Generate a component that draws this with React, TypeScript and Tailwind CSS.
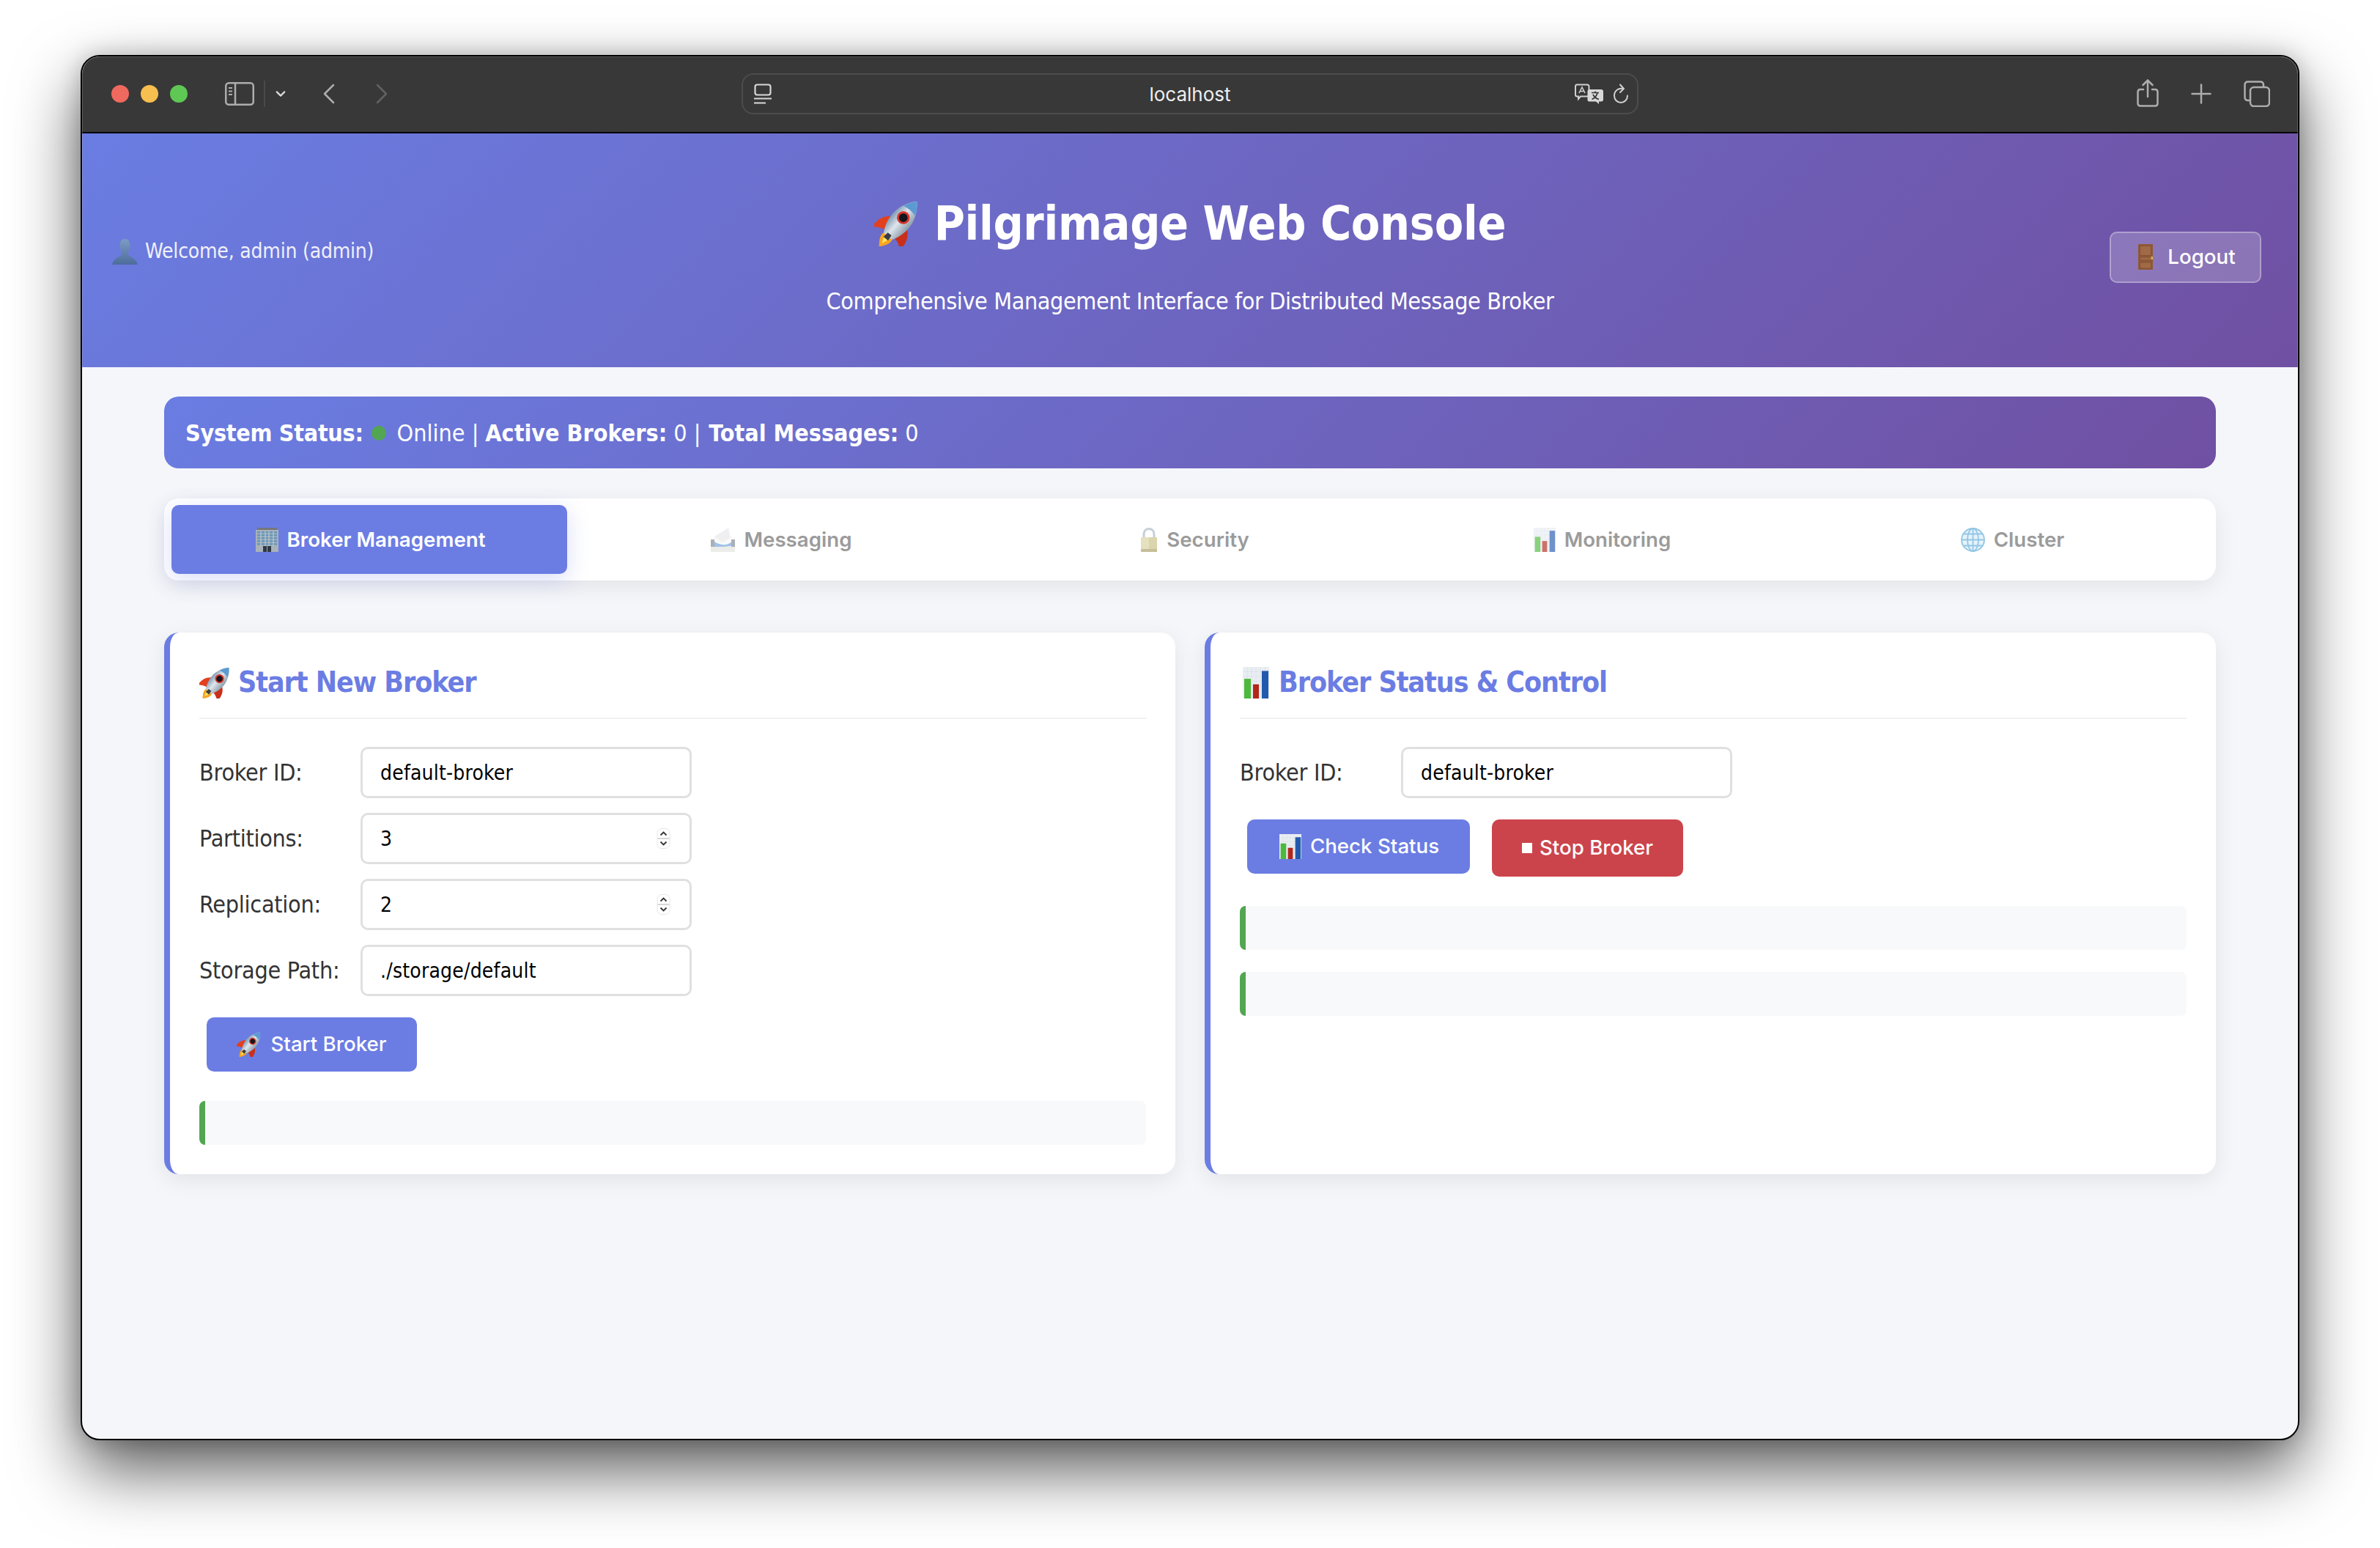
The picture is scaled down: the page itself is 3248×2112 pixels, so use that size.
import React from "react";

const sans = "font-['DejaVu_Sans_Condensed','Liberation_Sans',sans-serif]";
const ui = "font-['Inter','Liberation_Sans',sans-serif]";

function Rocket({ className }: { className: string }) {
  return (
    <svg viewBox="0 2 60 60" className={className}>
      <defs>
        <linearGradient id="rb" x1="0" y1="0" x2="1" y2="0">
          <stop offset="0" stopColor="#7f9ab4" />
          <stop offset="0.45" stopColor="#dfe6ec" />
          <stop offset="1" stopColor="#8d9cab" />
        </linearGradient>
      </defs>
      <g transform="rotate(40 32 32)">
        <path d="M25 52 C22 60 28 66 32 72 C36 66 42 60 39 52Z" fill="#f6a623" />
        <path d="M28.500 52 C27.500 58 31 62 32 66 C33 62 36.500 58 35.500 52Z" fill="#ffe668" />
        <path d="M19 30 C9 37 7 47 8 58 C13 53 19 50 25 50Z" fill="#e2401f" />
        <path d="M45 30 C55 37 57 47 56 58 C51 53 45 50 39 50Z" fill="#c92f1a" />
        <path d="M32 -6 C21 5 16 20 18 34 C19 42 22 49 25 54 L39 54 C42 49 45 42 46 34 C48 20 43 5 32 -6Z" fill="url(#rb)" />
        <path d="M32 -6 C27 -1 24 4 22 10 C28 8 36 8 42 10 C40 4 37 -1 32 -6Z" fill="#5c9bd1" />
        <circle cx="32" cy="22" r="8.500" fill="#d5372a" />
        <circle cx="32" cy="22" r="5.700" fill="#15151c" />
        <path d="M29 50 L35 50 L36 58 L28 58Z" fill="#3c3c46" />
      </g>
    </svg>
  );
}

function Chart({ className }: { className: string }) {
  return (
    <svg viewBox="0 0 36 40" className={className} preserveAspectRatio="none">
      <rect width="36" height="40" fill="#e9eef3" />
      <path d="M0 6H36M0 12H36M0 18H36M0 24H36M0 30H36M6 0V40M12 0V40M18 0V40M24 0V40M30 0V40" stroke="#d4dce4" strokeWidth="0.500" />
      <rect x="2" y="15" width="9" height="25" fill="#4cb93a" />
      <rect x="14" y="22" width="8" height="18" fill="#b3261a" />
      <rect x="26" y="5" width="9" height="35" fill="#2259ad" />
    </svg>
  );
}

function Building({ className }: { className: string }) {
  return (
    <svg viewBox="0 0 33 33" className={className}>
      <rect x="3" y="0" width="27" height="4" fill="#77777c" />
      <rect x="1" y="3" width="31" height="30" fill="#a8b2ba" />
      {[5, 9, 13, 17, 21].map((y) => (
        <rect key={y} x="3" y={y} width="27" height="2.600" fill="#6a97b8" />
      ))}
      <path d="M8 5V25M14 5V25M19 5V25M25 5V25" stroke="#c9d2d8" strokeWidth="1" />
      <rect x="11" y="25" width="11" height="8" fill="#2f3a44" />
      <rect x="16" y="25" width="1" height="8" fill="#9aa5ad" />
    </svg>
  );
}

function Envelope({ className }: { className: string }) {
  return (
    <svg viewBox="0 0 33 33" className={className}>
      <path d="M5 12 L24 0 L29 24 L6 27Z" fill="#e8e8ea" />
      <path d="M5 12 L16 20 L29 12 L29 24 L6 27Z" fill="#f6f6f6" />
      <path d="M5 19 C12 24 22 25 29 19 L29 25 L5 27Z" fill="#6fa3dc" />
      <rect x="0" y="16" width="5" height="12" fill="#7d8790" />
      <rect x="28" y="16" width="5" height="12" fill="#7d8790" />
      <rect x="0" y="26" width="33" height="7" fill="#e2e2dc" />
    </svg>
  );
}

function Lock({ className }: { className: string }) {
  return (
    <svg viewBox="0 0 24 33" className={className}>
      <path d="M5 15 V9 C5 -1 19 -1 19 9 V15" fill="none" stroke="#a8b6c6" strokeWidth="3" />
      <rect x="1" y="13" width="22" height="20" rx="1" fill="#c9bf82" />
      <rect x="1" y="13" width="11" height="20" fill="#d8d09a" />
      <rect x="1" y="29" width="22" height="4" fill="#a89c62" />
    </svg>
  );
}

function Globe({ className }: { className: string }) {
  return (
    <svg viewBox="0 0 33 33" className={className} fill="none" stroke="#5aa9d6" strokeWidth="1.800">
      <circle cx="16.500" cy="16.500" r="15.500" fill="#d8eefa" />
      <ellipse cx="16.500" cy="16.500" rx="7.500" ry="15.500" />
      <path d="M16.500 1V32M1 16.500H32M3.500 8.500H29.500M3.500 24.500H29.500" />
    </svg>
  );
}

function Door({ className }: { className: string }) {
  return (
    <svg viewBox="0 0 20 35" className={className}>
      <rect width="20" height="35" fill="#8f5a38" />
      <rect x="2.500" y="2.500" width="15" height="13" fill="#a06a45" stroke="#7c4c2e" strokeWidth="0.700" />
      <rect x="2.500" y="18" width="15" height="4" fill="#a06a45" stroke="#7c4c2e" strokeWidth="0.700" />
      <rect x="2.500" y="25" width="15" height="8" fill="#a06a45" stroke="#7c4c2e" strokeWidth="0.700" />
      <rect x="17.500" y="17" width="2.500" height="4" fill="#e0b040" />
    </svg>
  );
}

function Person({ className }: { className: string }) {
  return (
    <svg viewBox="0 0 35 35" className={className}>
      <defs>
        <linearGradient id="pg" x1="0" y1="0" x2="0" y2="1">
          <stop offset="0" stopColor="#7c9bc4" />
          <stop offset="1" stopColor="#4d6c9c" />
        </linearGradient>
      </defs>
      <path d="M17.500 0 C23 0 25 5 24.500 10 C24 15 22 18 21.500 21 C22 24 33 25 35 35 H0 C2 25 13 24 13.500 21 C13 18 11 15 10.500 10 C10 5 12 0 17.500 0Z" fill="url(#pg)" />
    </svg>
  );
}

function Spinner() {
  return (
    <svg viewBox="0 0 18 28" className="absolute right-[29px] top-1/2 h-[28px] w-[19px] -translate-y-1/2">
      <rect x="0.500" y="0.500" width="17" height="27" rx="6" fill="#fff" stroke="#e6e6e6" />
      <path d="M1 14H17" stroke="#d8d8d8" strokeWidth="2" />
      <path d="M5 9.500L9 5.500L13 9.500M5 18.500L9 22.500L13 18.500" fill="none" stroke="#333" strokeWidth="1.800" />
    </svg>
  );
}

function Field({ label, value, spin }: { label: string; value: string; spin?: boolean }) {
  return (
    <div className="mb-[20px] flex h-[70px] items-center">
      <label className={`w-[220px] shrink-0 text-[32px] tracking-[-0.25px] text-[#333] ${sans}`}>{label}</label>
      <div className="relative h-[70px] w-[452px]">
        <input
          readOnly
          value={value}
          className={`h-full w-full rounded-[10px] border-[3px] border-[#e0e0e0] bg-white px-[24px] text-[28px] tracking-[0.2px] text-black outline-none ${sans}`}
        />
        {spin && <Spinner />}
      </div>
    </div>
  );
}

function Msg({ className = "" }: { className?: string }) {
  return <div className={`h-[60px] rounded-[8px] border-l-[8px] border-[#52a651] bg-[#f8f9fa] ${className}`} />;
}

function Card({ icon, title, children }: { icon: React.ReactNode; title: string; children: React.ReactNode }) {
  return (
    <section className="rounded-[20px] border-l-[8px] border-[#6b7de3] bg-white p-[40px] shadow-[0_8px_30px_rgba(0,0,0,0.08)]">
      <h3 className={`mb-[38px] flex h-[78px] items-center gap-[10px] border-b-2 border-[#f0f0f0] pb-[20px] text-[39px] font-bold tracking-[-1.05px] text-[#6b7de3] ${sans}`}>
        {icon}
        {title}
      </h3>
      {children}
    </section>
  );
}

function Tab({ icon, label, active }: { icon: React.ReactNode; label: string; active?: boolean }) {
  return (
    <button
      className={`flex h-[94px] min-w-0 flex-1 items-center justify-center rounded-[10px] text-[27.7px] font-semibold ${ui} ${
        active ? "bg-[#6b7de3] text-white shadow-[0_8px_30px_rgba(107,125,227,0.25)]" : "text-[#666] opacity-65"
      }`}
    >
      <span className={`mt-[1px] flex items-center ${active ? "ml-[2px] gap-[11px]" : "ml-[5px] gap-[12px]"}`}>
        {icon}
        {label}
      </span>
    </button>
  );
}

export default function App() {
  return (
    <div className="h-[2112px] w-[3248px] overflow-hidden bg-white pl-[110px] pt-[75px]">
      <div className="relative flex h-[1890px] w-[3028px] flex-col overflow-hidden rounded-[26px] border-2 border-black bg-[#f5f6fa] shadow-[0_40px_90px_rgba(0,0,0,0.65),0_0_30px_rgba(0,0,0,0.2)]">
        <div className="flex h-[105px] shrink-0 items-center border-b-2 border-black bg-[#383838] pb-[1px]">
          <div className="ml-[40px] flex gap-[16px]">
            <span className="h-[24px] w-[24px] rounded-full bg-[#f0695e]" />
            <span className="h-[24px] w-[24px] rounded-full bg-[#f7bf4f]" />
            <span className="h-[24px] w-[24px] rounded-full bg-[#5fc754]" />
          </div>
          <svg viewBox="0 0 40 32" className="ml-[51px] h-[32px] w-[40px]" fill="none" stroke="#adadad" strokeWidth="2.500">
            <rect x="1.250" y="1.250" width="37.500" height="29.500" rx="4" />
            <path d="M14 1V31" />
            <path d="M5 8H10M5 12.500H10M5 17H10" strokeWidth="2" />
          </svg>
          <span className="ml-[13px] h-[36px] w-[2px] bg-[#4a4a4a]" />
          <svg viewBox="0 0 16 10" className="ml-[14px] h-[10px] w-[14px]" fill="none" stroke="#dcdcdc" strokeWidth="2.500" strokeLinecap="round" strokeLinejoin="round">
            <path d="M2 2L8 8L14 2" />
          </svg>
          <svg viewBox="0 0 16 28" className="ml-[51px] h-[28px] w-[16px]" fill="none" stroke="#adadad" strokeWidth="2.500" strokeLinecap="round" strokeLinejoin="round">
            <path d="M14 2L2 14L14 26" />
          </svg>
          <svg viewBox="0 0 16 28" className="ml-[56px] h-[28px] w-[16px]" fill="none" stroke="#626262" strokeWidth="2.500" strokeLinecap="round" strokeLinejoin="round">
            <path d="M2 2L14 14L2 26" />
          </svg>
          <div className="relative ml-[483px] flex h-[56px] w-[1224px] items-center justify-center rounded-[16px] border-2 border-[#4c4c4c]">
            <svg viewBox="0 0 24 28" className="absolute left-[15px] h-[28px] w-[24px]" fill="none" stroke="#d8d8d8" strokeWidth="2.200">
              <rect x="1.500" y="1.500" width="21" height="14" rx="3" />
              <path d="M0 20.500H24M0 26.500H16" />
            </svg>
            <span className={`text-[26px] text-[#eeeeee] ${ui}`}>localhost</span>
            <svg viewBox="0 0 40 28" className="absolute right-[45px] h-[28px] w-[40px]" fill="none" stroke="#cfcfcf" strokeWidth="2">
              <path d="M3 1.500H17C18.500 1.500 19.500 2.500 19.500 4V15C19.500 16.500 18.500 17.500 17 17.500H8L5 21V17.500H3C1.500 17.500 1 16.500 1 15V4C1 2.500 1.500 1.500 3 1.500Z" />
              <path d="M6 13L10 5L14 13M7.500 10.500H12.500" strokeWidth="1.600" />
              <path d="M20 8H36C38 8 39 9 39 11V22C39 23.500 38 24.500 36 24.500H33L33 28L29 24.500H20C18 24.500 17.500 23.500 17.500 22V11C17.500 9 18 8 20 8Z" fill="#d8d8d8" stroke="none" />
              <path d="M23 12.500H33M28 10.500V12.500M31 12.500C30 17 27 20 23.500 21.500M25 15C26.500 18 29 20.500 33 21.500" stroke="#383838" strokeWidth="1.700" />
            </svg>
            <svg viewBox="0 0 22 28" className="absolute right-[11px] h-[28px] w-[22px]" fill="none" stroke="#d0d0d0" strokeWidth="2" strokeLinecap="round">
              <path d="M14 7C7 6 2 10 2 16.500C2 22 6 26 11 26C16 26 20 22 20 16.500" />
              <path d="M10 1.500L15 7L10 12" />
            </svg>
          </div>
          <svg viewBox="0 0 30 38" className="ml-[680px] mb-[2px] h-[38px] w-[30px]" fill="none" stroke="#adadad" strokeWidth="2.500" strokeLinecap="round">
            <path d="M9 14H5C2.500 14 1.500 15.500 1.500 17.500V33C1.500 35 2.500 36.500 5 36.500H25C27.500 36.500 28.500 35 28.500 33V17.500C28.500 15.500 27.500 14 25 14H21" />
            <path d="M15 24V2M8.500 8L15 1.500L21.500 8" />
          </svg>
          <svg viewBox="0 0 28 28" className="ml-[44px] h-[28px] w-[28px]" stroke="#adadad" strokeWidth="2.500" strokeLinecap="round">
            <path d="M14 1.500V26.500M1.500 14H26.500" />
          </svg>
          <svg viewBox="0 0 36 36" className="ml-[44px] h-[36px] w-[36px]" fill="none" stroke="#adadad" strokeWidth="2.500">
            <rect x="9" y="9" width="26" height="26" rx="5" />
            <path d="M9 27H6C3 27 1.500 25.500 1.500 22.500V6C1.500 3 3 1.500 6 1.500H22.500C25.500 1.500 27 3 27 6V9" />
          </svg>
        </div>

        <div className="min-h-0 flex-1">
          <header className="grid h-[319px] grid-cols-[1fr_auto_1fr] items-center bg-[linear-gradient(135deg,#6a7de2_0%,#7050a2_100%)] text-white">
            <div className={`mt-[3px] flex items-center gap-[10px] pl-[41px] text-[28px] tracking-[-0.2px] text-[#f0f0fa] ${sans}`}>
              <Person className="h-[35px] w-[35px]" />
              Welcome, admin (admin)
            </div>
            <div className={`flex flex-col items-center ${sans}`}>
              <h1 className="mb-[46px] mt-[12px] flex items-center gap-[20px] text-[64px] font-bold leading-[80px] tracking-[-0.3px]">
                <Rocket className="h-[62px] w-[62px]" />
                Pilgrimage Web Console
              </h1>
              <p className="text-[32px] leading-[40px] tracking-[-0.38px]">Comprehensive Management Interface for Distributed Message Broker</p>
            </div>
            <div className="mt-[18px] flex justify-end pr-[50px]">
              <button className={`flex h-[70px] w-[207px] items-center justify-center gap-[20px] rounded-[10px] border-2 border-white/30 bg-white/20 pl-[4px] text-[27.7px] font-medium ${ui}`}>
                <Door className="h-[35px] w-[20px]" />
                Logout
              </button>
            </div>
          </header>

          <main className="mx-auto w-[2800px] pt-[40px]">
            <div className={`flex h-[98px] items-center rounded-[20px] bg-[linear-gradient(135deg,#6a7de2_0%,#7050a2_100%)] pl-[29px] pt-[1px] text-[32px] text-white ${sans}`}>
              <b className="tracking-[-0.3px]">System Status:</b>
              <span className="ml-[11px] mr-[15px] h-[20px] w-[20px] rounded-full bg-[#52a651]" />
              <span>Online | </span>
              <b className="ml-[9px]">Active Brokers:</b>
              <span className="ml-[9px]">0 | </span>
              <b className="ml-[11px]">Total Messages:</b>
              <span className="ml-[9px]">0</span>
            </div>

            <nav className="mt-[41px] flex h-[112px] items-center gap-[20px] rounded-[20px] bg-white px-[10px] shadow-[0_8px_30px_rgba(0,0,0,0.08)]">
              <Tab active icon={<Building className="h-[33px] w-[33px]" />} label="Broker Management" />
              <Tab icon={<Envelope className="h-[33px] w-[33px]" />} label="Messaging" />
              <Tab icon={<Lock className="ml-[8px] h-[33px] w-[24px]" />} label="Security" />
              <Tab icon={<Chart className="h-[33px] w-[30px]" />} label="Monitoring" />
              <Tab icon={<Globe className="h-[33px] w-[33px]" />} label="Cluster" />
            </nav>

            <div className="mt-[71px] grid grid-cols-2 gap-[40px]">
              <Card icon={<Rocket className="h-[43px] w-[43px]" />} title="Start New Broker">
                <Field label="Broker ID:" value="default-broker" />
                <Field label="Partitions:" value="3" spin />
                <Field label="Replication:" value="2" spin />
                <Field label="Storage Path:" value="./storage/default" />
                <button className={`ml-[10px] mt-[29px] flex h-[74px] w-[287px] items-center justify-center gap-[12px] rounded-[10px] bg-[#6b7de3] text-[27.7px] font-medium text-white ${ui}`}>
                  <Rocket className="h-[34px] w-[34px]" />
                  Start Broker
                </button>
                <Msg className="mt-[40px]" />
              </Card>
              <Card icon={<Chart className="ml-[4px] mr-[3px] h-[43px] w-[36px]" />} title="Broker Status & Control">
                <Field label="Broker ID:" value="default-broker" />
                <div className={`ml-[10px] mt-[29px] flex items-start gap-[30px] text-[27.7px] font-medium text-white ${ui}`}>
                  <button className="flex h-[74px] w-[304px] items-center justify-center gap-[12px] rounded-[10px] bg-[#6b7de3] pl-[2px]">
                    <Chart className="h-[34px] w-[30px]" />
                    Check Status
                  </button>
                  <button className="flex h-[78px] w-[261px] items-center justify-center gap-[10px] rounded-[10px] bg-[#cc444b]">
                    <span className="h-[14px] w-[14px] bg-white" />
                    Stop Broker
                  </button>
                </div>
                <Msg className="mt-[40px]" />
                <Msg className="mt-[30px]" />
              </Card>
            </div>
          </main>
        </div>
        <div className="pointer-events-none absolute inset-0 rounded-[24px] border border-white/20" />
      </div>
    </div>
  );
}
